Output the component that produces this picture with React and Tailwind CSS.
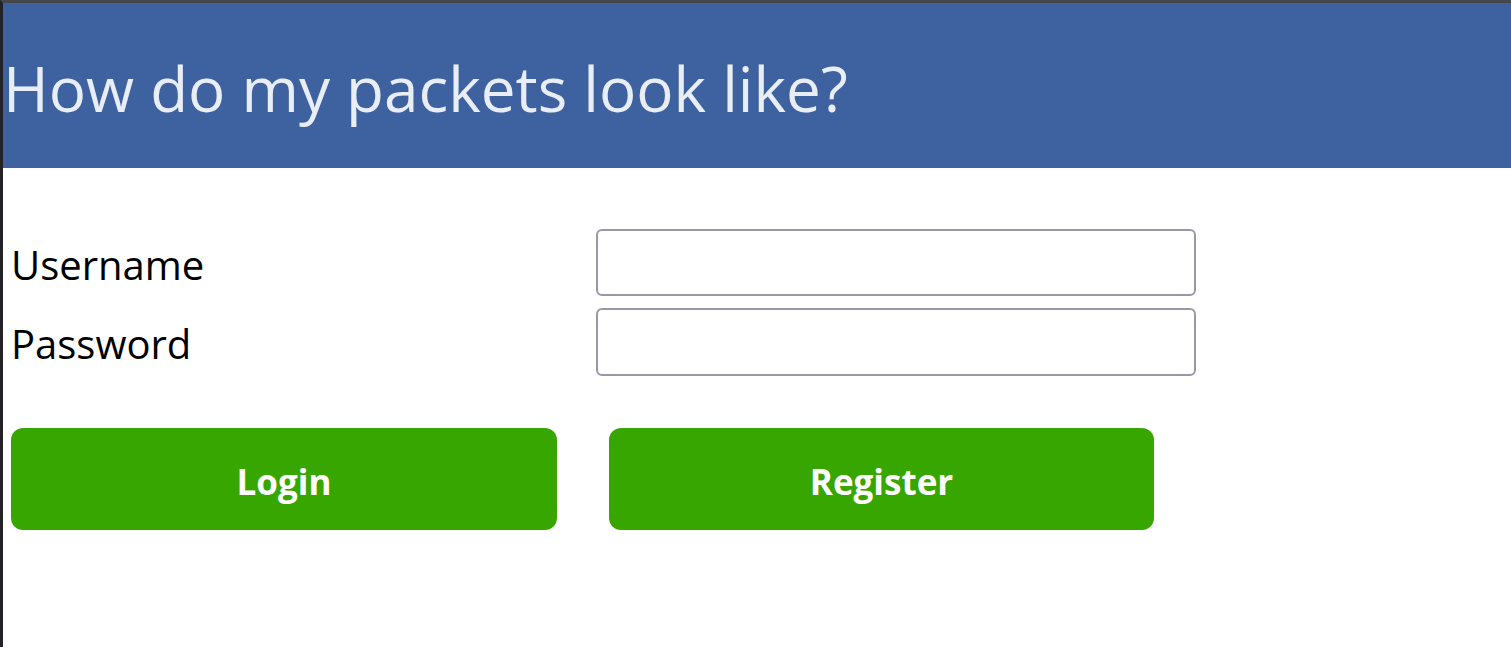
export default function App() {
  return (
    <div className="min-h-[647px] bg-white border-l-[3px] border-t-[3px] border-l-[#232327] border-t-[#45474d] font-['Open_Sans',sans-serif]">
      <header className="h-[165px] bg-[#3e62a0] flex items-center">
        <h1 className="text-[#e9edf5] text-[62px] font-normal leading-none pt-[4px]">How do my packets look like?</h1>
      </header>

      <div className="pl-[8px] pt-[61px]">
        <div className="flex flex-col gap-[12px]">
          <div className="flex items-center">
            <label className="w-[585px] text-[40px] leading-none text-black pt-[4px]">Username</label>
            <input type="text" className="w-[600px] h-[67px] border-2 border-[#9a98a6] rounded-[6px] px-3 text-[30px] outline-none" />
          </div>
          <div className="flex items-center">
            <label className="w-[585px] text-[40px] leading-none text-black pt-[4px]">Password</label>
            <input type="password" className="w-[600px] h-[68px] border-2 border-[#9a98a6] rounded-[6px] px-3 text-[30px] outline-none" />
          </div>
        </div>

        <div className="flex gap-[52px] mt-[52px]">
          <button className="w-[546px] h-[102px] bg-[#38a600] rounded-[12px] text-white text-[35px] font-bold pt-[6px]">Login</button>
          <button className="w-[545px] h-[102px] bg-[#38a600] rounded-[12px] text-white text-[35px] font-bold pt-[6px]">Register</button>
        </div>
      </div>
    </div>
  );
}
